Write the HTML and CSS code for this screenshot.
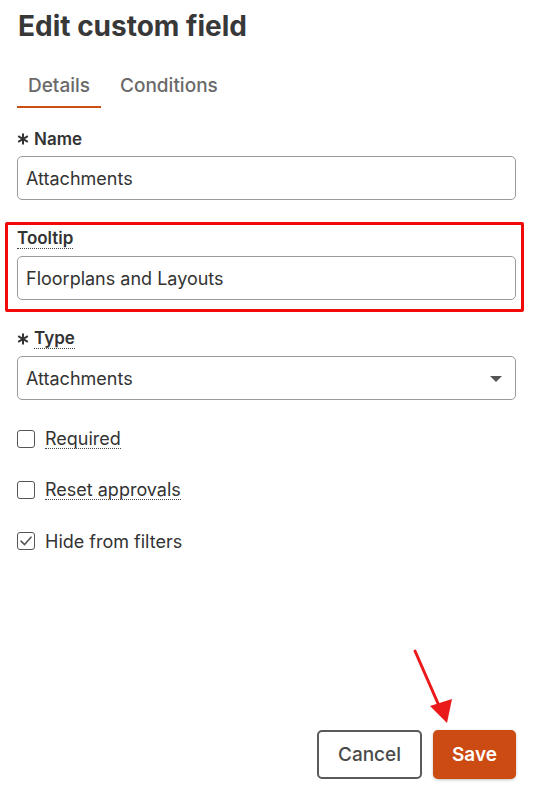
FILE: index.html
```html
<!DOCTYPE html>
<html>
<head>
<meta charset="utf-8">
<link rel="stylesheet" href="styles.css">
</head>
<body>
<div class="page">
  <h1 class="title">Edit custom field</h1>
  <div class="tabs">
    <div class="tab active">Details</div>
    <div class="tab">Conditions</div>
  </div>

  <div class="field">
    <label class="label"><svg class="req" viewBox="0 0 12 12" width="12" height="12"><g stroke="#333" stroke-width="2" stroke-linecap="butt"><line x1="6" y1="0.5" x2="6" y2="11.5"/><line x1="1.2" y1="3.2" x2="10.8" y2="8.8"/><line x1="1.2" y1="8.8" x2="10.8" y2="3.2"/></g></svg>Name</label>
    <div class="input">Attachments</div>
  </div>

  <div class="field highlighted">
    <label class="label"><span class="dotted">Tooltip</span></label>
    <div class="input">Floorplans and Layouts</div>
  </div>

  <div class="field">
    <label class="label"><svg class="req" viewBox="0 0 12 12" width="12" height="12"><g stroke="#333" stroke-width="2"><line x1="6" y1="0.5" x2="6" y2="11.5"/><line x1="1.2" y1="3.2" x2="10.8" y2="8.8"/><line x1="1.2" y1="8.8" x2="10.8" y2="3.2"/></g></svg><span class="dotted">Type</span></label>
    <div class="input select">Attachments<span class="caret"></span></div>
  </div>

  <div class="checks">
    <div class="check"><span class="box"></span><span class="dotted">Required</span></div>
    <div class="check"><span class="box"></span><span class="dotted">Reset approvals</span></div>
    <div class="check"><span class="box checked"><svg viewBox="0 0 18 18" width="18" height="18"><path d="M4 9.2 L7.6 12.6 L14 5.2" fill="none" stroke="#555" stroke-width="1.6" stroke-linejoin="round" stroke-linecap="round"/></svg></span><span>Hide from filters</span></div>
  </div>

  <div class="actions">
    <button class="btn cancel">Cancel</button>
    <button class="btn save">Save</button>
  </div>

  <svg class="arrow" width="60" height="90" viewBox="0 0 60 90">
    <line x1="8" y1="3" x2="33" y2="60" stroke="#ea1a1a" stroke-width="3" stroke-linecap="round"/>
    <polygon points="23,58 45,51 40,75" fill="#ea1a1a"/>
  </svg>
</div>
</body>
</html>
```

FILE: styles.css
```css
* { box-sizing: border-box; }
html, body { margin: 0; padding: 0; background: #fff; }
body {
  font-family: "Inter", "Open Sans", "Liberation Sans", sans-serif;
  color: #333;
}
.page {
  position: relative;
  min-height: 795px;
  padding: 8px 26px 16px 17px;
  display: flex;
  flex-direction: column;
}
.title {
  margin: 0 0 0 1px;
  font-size: 28px;
  line-height: 36px;
  font-weight: 700;
  color: #383838;
  letter-spacing: 0;
}
.tabs {
  display: flex;
  gap: 8px;
  margin-top: 22px;
}
.tab {
  padding: 9px 11px 9px;
  font-size: 19px;
  line-height: 22px;
  font-weight: 500;
  color: #6a6a6a;
  border-bottom: 2px solid transparent;
}
.tab.active { border-bottom-color: #cc4e12; }

.field { position: relative; margin-top: 20px; }
.field + .field { margin-top: 28px; }
.label {
  display: flex;
  align-items: center;
  gap: 5px;
  height: 22px;
  font-size: 17px;
  font-weight: 600;
  color: #333;
  margin-bottom: 6px;
}
.req { flex: none; }
.dotted {
  border-bottom: 1.5px dotted #444;
  line-height: 19px;
}
.input {
  position: relative;
  height: 44px;
  border: 1px solid #9a9a9a;
  border-radius: 5px;
  padding: 0 8px;
  display: flex;
  align-items: center;
  font-size: 18px;
  color: #333;
}
.caret {
  position: absolute;
  right: 13px;
  top: 19px;
  width: 0; height: 0;
  border-left: 6px solid transparent;
  border-right: 6px solid transparent;
  border-top: 6px solid #555;
}
.highlighted::before {
  content: "";
  position: absolute;
  left: -12px;
  right: -8px;
  top: -6px;
  bottom: -12px;
  border: 3px solid #f20a0a;
  border-radius: 2px;
  pointer-events: none;
}

.checks {
  display: flex;
  flex-direction: column;
  gap: 29px;
  margin-top: 28px;
}
.check {
  display: flex;
  align-items: center;
  gap: 10px;
  height: 22px;
  font-size: 18px;
  color: #333;
}
.check .dotted { font-weight: 400; }
.box {
  width: 18px;
  height: 18px;
  border: 1.5px solid #555;
  border-radius: 3px;
  position: relative;
  flex: none;
}
.box svg { position: absolute; left: -1.5px; top: -1.5px; }

.actions {
  margin-top: auto;
  display: flex;
  justify-content: flex-end;
  gap: 11px;
}
.btn {
  height: 49px;
  font-family: inherit;
  font-size: 19px;
  border-radius: 5px;
  cursor: pointer;
}
.cancel {
  width: 105px;
  background: #fff;
  border: 2px solid #5a5a5a;
  color: #4a4a4a;
  font-weight: 500;
}
.save {
  width: 83px;
  background: #cc4b12;
  border: none;
  color: #fff;
  font-weight: 600;
  box-shadow: 0 1px 3px rgba(0,0,0,0.25);
}
.arrow {
  position: absolute;
  left: 407px;
  top: 648px;
}
```
